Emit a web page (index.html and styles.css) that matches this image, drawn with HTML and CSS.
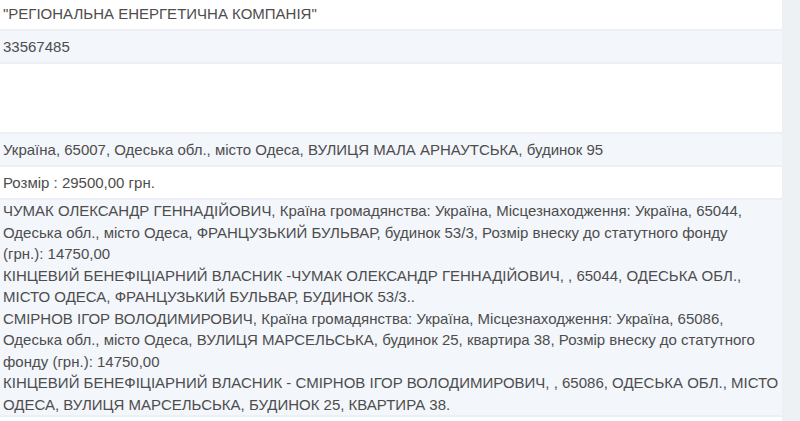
FILE: index.html
```html
<!DOCTYPE html>
<html lang="uk">
<head>
<meta charset="utf-8">
<link rel="stylesheet" href="styles.css">
</head>
<body>
<div class="list">
  <div class="row row-first">"РЕГІОНАЛЬНА ЕНЕРГЕТИЧНА КОМПАНІЯ"</div>
  <div class="row alt">33567485</div>
  <div class="row empty"></div>
  <div class="row alt">Україна, 65007, Одеська обл., місто Одеса, ВУЛИЦЯ МАЛА АРНАУТСЬКА, будинок 95</div>
  <div class="row">Розмір : 29500,00 грн.</div>
  <div class="row alt multi">
    <div class="entry">ЧУМАК ОЛЕКСАНДР ГЕННАДІЙОВИЧ, Країна громадянства: Україна, Місцезнаходження: Україна, 65044,<br>Одеська обл., місто Одеса, ФРАНЦУЗЬКИЙ БУЛЬВАР, будинок 53/3, Розмір внеску до статутного фонду<br>(грн.): 14750,00</div>
    <div class="entry">КІНЦЕВИЙ БЕНЕФІЦІАРНИЙ ВЛАСНИК -ЧУМАК ОЛЕКСАНДР ГЕННАДІЙОВИЧ, , 65044, ОДЕСЬКА ОБЛ.,<br>МІСТО ОДЕСА, ФРАНЦУЗЬКИЙ БУЛЬВАР, БУДИНОК 53/3..</div>
    <div class="entry">СМІРНОВ ІГОР ВОЛОДИМИРОВИЧ, Країна громадянства: Україна, Місцезнаходження: Україна, 65086,<br>Одеська обл., місто Одеса, ВУЛИЦЯ МАРСЕЛЬСЬКА, будинок 25, квартира 38, Розмір внеску до статутного<br>фонду (грн.): 14750,00</div>
    <div class="entry">КІНЦЕВИЙ БЕНЕФІЦІАРНИЙ ВЛАСНИК - СМІРНОВ ІГОР ВОЛОДИМИРОВИЧ, , 65086, ОДЕСЬКА ОБЛ., МІСТО<br>ОДЕСА, ВУЛИЦЯ МАРСЕЛЬСЬКА, БУДИНОК 25, КВАРТИРА 38.</div>
  </div>
  <div class="row tail"></div>
</div>
</body>
</html>
```
FILE: styles.css
```css
html, body {
  margin: 0;
  padding: 0;
}
body {
  background: #eef1f4;
  font-family: "Liberation Sans", Arial, sans-serif;
  font-size: 15px;
  color: #4d4d4d;
  overflow: hidden;
  height: 421px;
}
.list {
  width: 782px;
  display: flex;
  flex-direction: column;
}
.row {
  background: #ffffff;
  padding: 5px 3px;
  line-height: 21px;
  min-height: 21px;
  border-bottom: 2px solid #eceff3;
}
.row-first {
  padding-top: 3px;
}
.alt {
  background: #f3f6fb;
}
.empty {
  min-height: 0;
  height: 58px;
}
.multi {
  padding: 0 3px;
  line-height: 21.5px;
  white-space: nowrap;
}
.tail {
  min-height: 0;
  height: 4px;
  padding: 0;
  border-bottom: 0;
}
```
